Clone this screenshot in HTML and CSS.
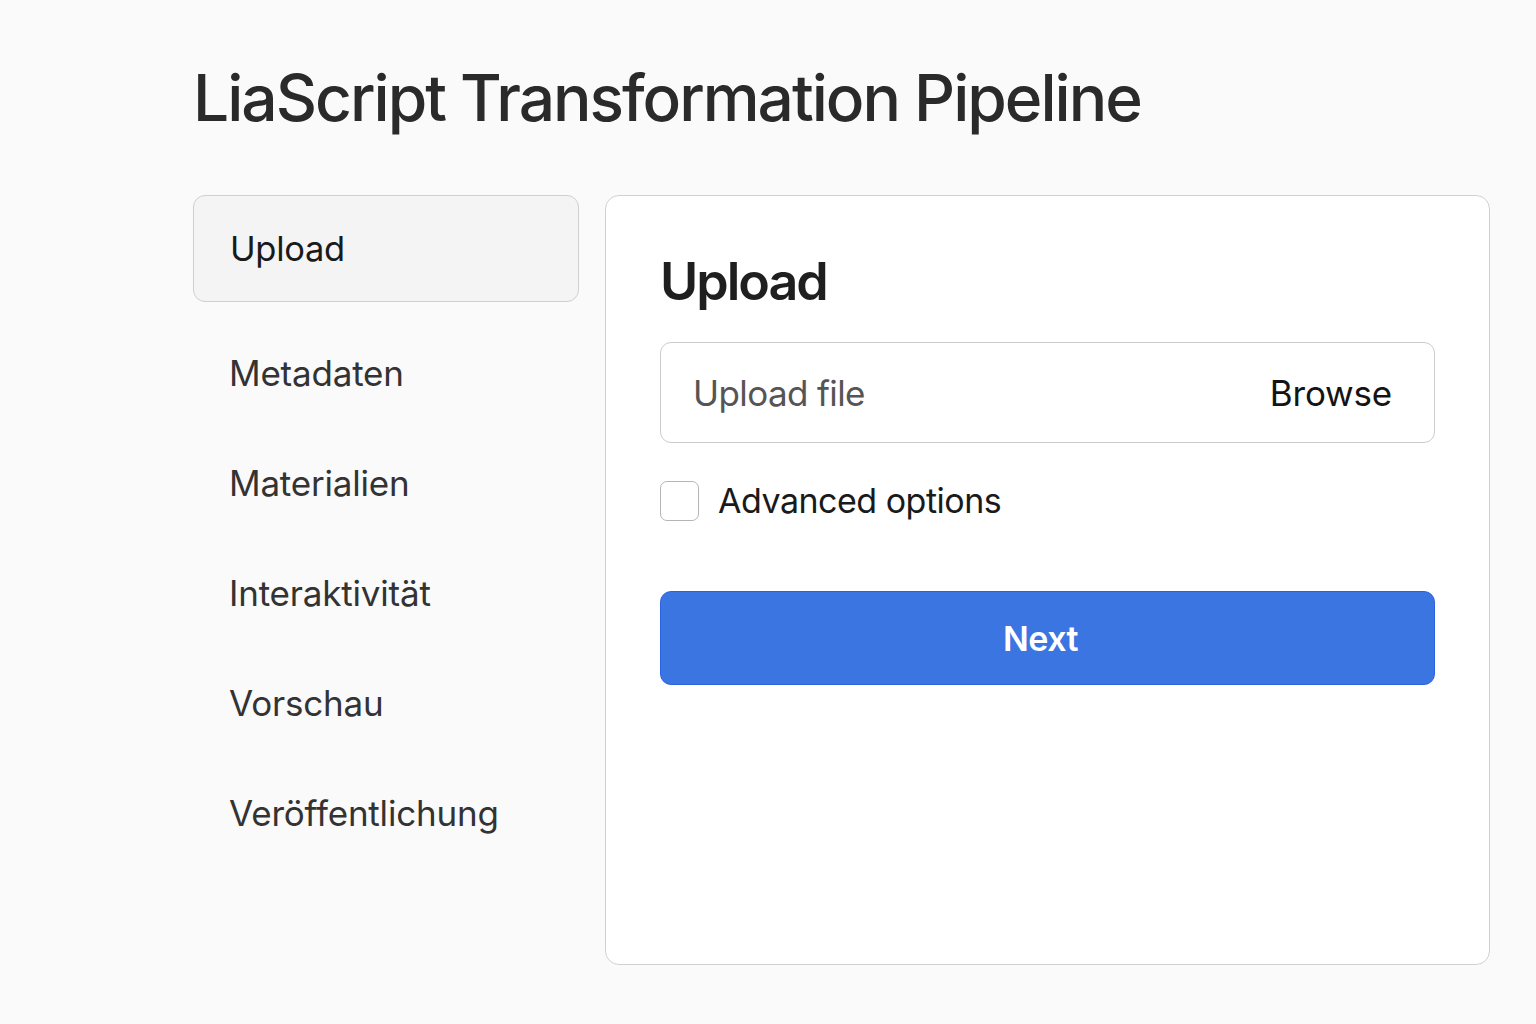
FILE: index.html
```html
<!DOCTYPE html>
<html lang="de">
<head>
<meta charset="utf-8">
<title>LiaScript Transformation Pipeline</title>
<link rel="stylesheet" href="styles.css">
</head>
<body>
<div class="page">
  <h1 class="title">LiaScript Transformation Pipeline</h1>
  <div class="layout">
    <nav class="sidebar">
      <div class="nav-item active">Upload</div>
      <div class="nav-item">Metadaten</div>
      <div class="nav-item">Materialien</div>
      <div class="nav-item">Interaktivität</div>
      <div class="nav-item">Vorschau</div>
      <div class="nav-item">Veröffentlichung</div>
    </nav>
    <main class="card">
      <h2 class="card-title">Upload</h2>
      <div class="file-input">
        <span class="placeholder">Upload file</span>
        <span class="browse">Browse</span>
      </div>
      <label class="check-row">
        <span class="checkbox"></span>
        <span class="check-label">Advanced options</span>
      </label>
      <button class="next-btn">Next</button>
    </main>
  </div>
</div>
</body>
</html>
```

FILE: styles.css
```css
* { box-sizing: border-box; }
html, body { margin: 0; padding: 0; }
body {
  background: #fafafa;
  font-family: Inter, "Noto Sans", "Liberation Sans", sans-serif;
  color: #2a2a2a;
  width: 1536px;
  height: 1024px;
  overflow: hidden;
}
.page {
  padding: 58px 46px 0 193px;
}
.title {
  margin: 0;
  font-size: 64px;
  font-weight: 500;
  letter-spacing: -2px;
  line-height: 80px;
  color: #2a2a2a;
}
.layout {
  display: flex;
  gap: 26px;
  margin-top: 57px;
}
.sidebar {
  width: 386px;
  display: flex;
  flex-direction: column;
}
.nav-item {
  height: 110px;
  padding-left: 36px;
  display: flex;
  align-items: center;
  font-size: 35px;
  letter-spacing: -0.2px;
  color: #333;
}
.nav-item.active {
  height: 107px;
  background: #f4f4f4;
  border: 1px solid #cfcfcf;
  border-radius: 12px;
  color: #1a1a1a;
  font-size: 34.5px;
  letter-spacing: -0.3px;
  margin-bottom: 16px;
}
.card {
  flex: 1;
  height: 770px;
  background: #fff;
  border: 1.5px solid #d0d0d0;
  border-radius: 14px;
  padding: 51px 54px 0 54px;
}
.card-title {
  margin: 0;
  font-size: 52px;
  font-weight: 600;
  line-height: 70px;
  color: #1f1f1f;
  letter-spacing: -2px;
}
.file-input {
  margin-top: 25px;
  height: 101px;
  border: 1.5px solid #cccccc;
  border-radius: 11px;
  display: flex;
  align-items: center;
  justify-content: space-between;
  padding: 0 42px 0 32px;
  font-size: 35px;
}
.placeholder { color: #555; letter-spacing: -0.6px; }
.browse { color: #141414; letter-spacing: -0.2px; }
.check-row {
  display: flex;
  align-items: center;
  gap: 19px;
  margin-top: 37px;
}
.checkbox {
  width: 39px;
  height: 40px;
  border: 1.5px solid #b5b5b5;
  border-radius: 7px;
  background: #fff;
}
.check-label {
  font-size: 34px;
  letter-spacing: -0.5px;
  color: #1a1a1a;
}
.next-btn {
  display: block;
  width: 100%;
  margin-top: 70px;
  height: 94px;
  padding: 0 14px 0 0;
  background: #3b75e2;
  border: 1.5px solid #2a62e0;
  border-radius: 11px;
  color: #fff;
  font-family: Inter, "Noto Sans", "Liberation Sans", sans-serif;
  font-size: 34px;
  font-weight: 600;
  letter-spacing: -0.5px;
}
```
